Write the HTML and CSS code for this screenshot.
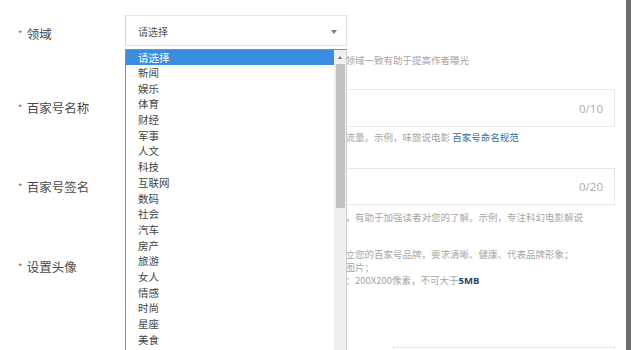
FILE: index.html
```html
<!DOCTYPE html>
<html lang="zh-CN">
<head>
<meta charset="utf-8">
<title>百家号注册</title>
<link rel="stylesheet" href="styles.css">
</head>
<body>
<div class="page">
  <div class="form">
    <div class="row row-1">
      <div class="label"><span class="req">*</span>领域</div>
      <div class="field">
        <div class="select">
          <span class="select-text">请选择</span>
          <span class="arrow"></span>
          <div class="dropdown">
            <ul class="options">
              <li class="active">请选择</li>
              <li>新闻</li>
              <li>娱乐</li>
              <li>体育</li>
              <li>财经</li>
              <li>军事</li>
              <li>人文</li>
              <li>科技</li>
              <li>互联网</li>
              <li>数码</li>
              <li>社会</li>
              <li>汽车</li>
              <li>房产</li>
              <li>旅游</li>
              <li>女人</li>
              <li>情感</li>
              <li>时尚</li>
              <li>星座</li>
              <li>美食</li>
            </ul>
            <div class="scrollbar">
              <div class="sb-up"><span class="sb-arrow"></span></div>
              <div class="sb-thumb"></div>
            </div>
          </div>
        </div>
        <p class="hint hint-1">请选择一个与您发布的内容最为相符的领域，与内容领域一致有助于提高作者曝光</p>
      </div>
    </div>

    <div class="row row-2">
      <div class="label"><span class="req">*</span>百家号名称</div>
      <div class="field">
        <div class="input input-name"><span class="count">0/10</span></div>
        <p class="hint hint-2">名称是读者认识您的第一印象，好的名称能带来更多流量。示例，味旅说电影 <a class="link" href="#">百家号命名规范</a></p>
      </div>
    </div>

    <div class="row row-3">
      <div class="label"><span class="req">*</span>百家号签名</div>
      <div class="field">
        <div class="input input-sign"><span class="count">0/20</span></div>
        <p class="hint hint-3">签名是对百家号的简单介绍，请准确描述您内容方向，有助于加强读者对您的了解。示例，专注科幻电影解说</p>
      </div>
    </div>

    <div class="row row-4">
      <div class="label"><span class="req">*</span>设置头像</div>
      <div class="field">
        <p class="hint hint-4">头像是读者识别您的重要标志，上传头像将有助于建立您的百家号品牌，要求清晰、健康、代表品牌形象；</p>
        <p class="hint hint-5">请勿上传含有二维码、联系方式、广告推广等信息的图片；</p>
        <p class="hint hint-6">头像支持常见图片格式，建议上传正方形图片，尺寸：200X200像素，不可大于<b class="size">5MB</b></p>
        <div class="upload-box"></div>
      </div>
    </div>
  </div>
</div>
</body>
</html>
```
FILE: styles.css
```css
html, body {
  margin: 0;
  padding: 0;
  overflow: hidden;
  height: 100%;
}

body {
  background: #ffffff;
  font-family: "Noto Sans CJK SC", "Noto Sans", "Liberation Sans", sans-serif;
  color: #555;
}

.page {
  width: 626px;
  height: 350px;
  border-right: 5px solid #6b6b6b;
  box-sizing: content-box;
  background: #fff;
  overflow: hidden;
}

.form {
  padding-top: 15px;
}

.row {
  display: flex;
}

.row-1 { margin-bottom: 22.5px; }
.row-2 { margin-bottom: 24.5px; }
.row-3 { margin-bottom: 24px; }

.label {
  width: 107px;
  padding-left: 18px;
  padding-top: 8.5px;
  height: 20px;
  line-height: 20px;
  font-size: 12.5px;
  color: #4a4a4a;
  flex: none;
  white-space: nowrap;
}

.row-4 .label { padding-top: 9.5px; }

.req {
  color: #d9534f;
  font-size: 10px;
  margin-right: 4px;
  position: relative;
  top: -1px;
}

.field {
  width: 490px;
  flex: none;
}

/* select */
.select {
  position: relative;
  width: 222px;
  height: 31px;
  box-sizing: border-box;
  border: 1px solid #e3e3e3;
  border-left-color: #d6d6d6;
  display: flex;
  align-items: center;
  justify-content: space-between;
  padding: 2px 9px 0 12px;
}

.select-text {
  font-size: 10px;
  color: #555;
}

.arrow {
  width: 0;
  height: 0;
  border-left: 3px solid transparent;
  border-right: 3px solid transparent;
  border-top: 4px solid #7a7a7a;
}

.dropdown {
  position: absolute;
  left: -1px;
  top: 33px;
  width: 222px;
  height: 301px;
  box-sizing: border-box;
  border: 1px solid #8c8c8c;
  border-right-color: #cfcfcf;
  border-bottom: none;
  background: #fff;
  display: flex;
  z-index: 10;
  overflow: hidden;
}

.options {
  list-style: none;
  margin: 0;
  padding: 0;
  flex: 1;
}

.options li {
  height: 15.7px;
  line-height: 15.7px;
  font-size: 10.5px;
  color: #444;
  padding-left: 12px;
  white-space: nowrap;
}

.options li.active {
  background: #3a8ddf;
  color: #fff;
  height: 15px;
}

.scrollbar {
  width: 12px;
  background: #efefef;
  flex: none;
  display: flex;
  flex-direction: column;
  align-items: center;
}

.sb-up {
  height: 14px;
  width: 12px;
  display: flex;
  align-items: center;
  justify-content: center;
}

.sb-arrow {
  width: 0;
  height: 0;
  border-left: 2.5px solid transparent;
  border-right: 2.5px solid transparent;
  border-bottom: 3px solid #707070;
}

.sb-thumb {
  width: 9px;
  height: 144px;
  background: #c1c1c1;
}

/* inputs */
.input {
  box-sizing: border-box;
  width: 490px;
  border: 1px solid #e8e8e8;
  display: flex;
  align-items: center;
  justify-content: flex-end;
  padding-right: 11px;
}

.input-name { height: 38px; }
.input-sign { height: 37px; }

.count {
  font-family: "Open Sans", "Liberation Sans", sans-serif;
  font-size: 11.5px;
  color: #adadad;
}

/* hints */
.hint {
  margin: 0;
  padding-left: 2px;
  font-size: 9.5px;
  line-height: 13px;
  color: #a6a6a6;
  white-space: nowrap;
}

.hint-1 { margin-top: 7.5px; }
.hint-2 { margin-top: 3.5px; }
.hint-3 { margin-top: 5.5px; }

.link {
  color: #3d6a96;
  text-decoration: none;
}

.size {
  color: #2c4163;
  font-weight: bold;
  font-family: "Open Sans", "Liberation Sans", sans-serif;
}

.upload-box {
  margin-top: 60.5px;
  margin-left: 268px;
  width: 222px;
  height: 3px;
  box-sizing: border-box;
  border: 1px solid #e6e6e6;
  border-bottom: none;
}
```
